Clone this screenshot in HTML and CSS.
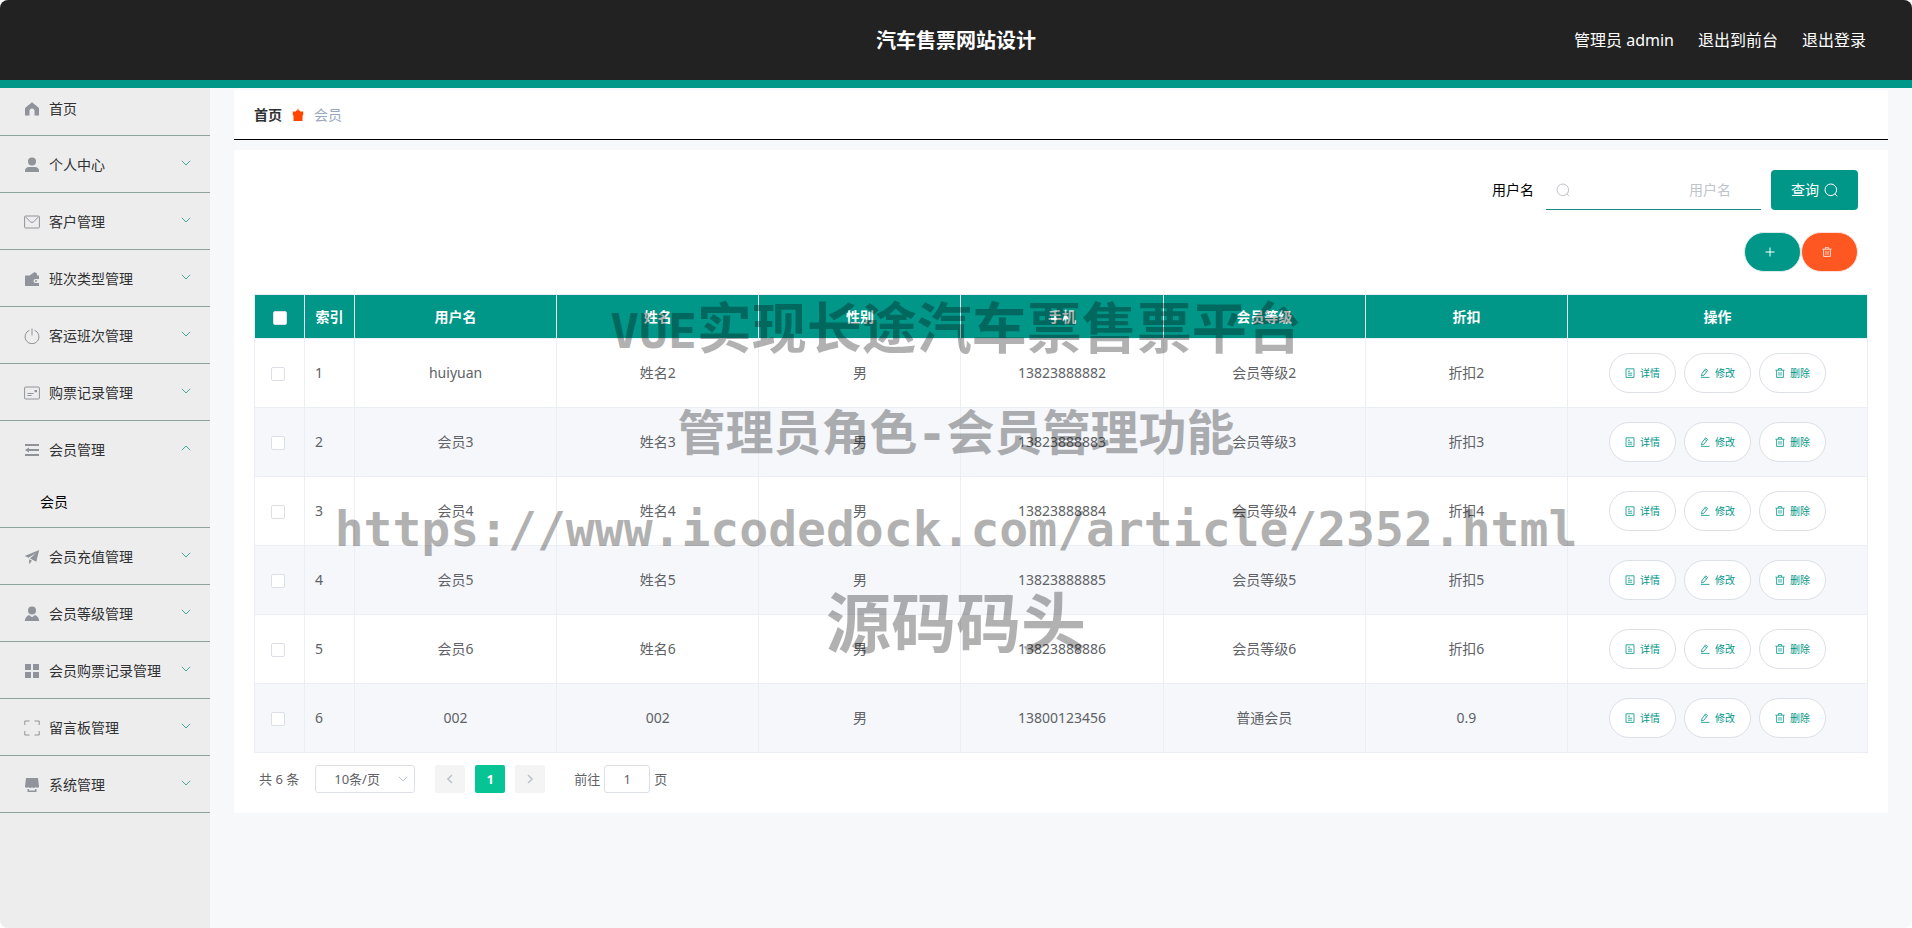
FILE: index.html
```html
<!DOCTYPE html>
<html lang="zh-CN">
<head>
<meta charset="utf-8">
<title>汽车售票网站设计</title>
<link rel="stylesheet" href="styles.css">
</head>
<body>
<svg class="sprite" aria-hidden="true">
  <symbol id="i-home" viewBox="0 0 16 16"><path fill="currentColor" d="M8 1.200 1 7v7.600h4.500V10a2.500 2.500 0 0 1 5 0v4.600H15V7z"/></symbol>
  <symbol id="i-user" viewBox="0 0 16 16"><circle fill="currentColor" cx="8" cy="4.500" r="4"/><path fill="currentColor" d="M1 15v-1.500a4 4 0 0 1 4-3.500h6a4 4 0 0 1 4 3.500V15z"/></symbol>
  <symbol id="i-mail" viewBox="0 0 16 16"><rect x=".6" y="2" width="14.800" height="12" rx="1" fill="none" stroke="currentColor"/><path fill="none" stroke="currentColor" d="m1.500 2.800 4.800 5a2.500 2.500 0 0 0 3.400 0l4.800-5"/></symbol>
  <symbol id="i-wallet" viewBox="0 0 16 16"><path fill="currentColor" d="M1 4.500h4.500L10.500 1l2.500 1.500v2h2V8h-3.500a2 2 0 0 0 0 4H15v3H1z"/><circle fill="currentColor" cx="12" cy="10" r="1"/></symbol>
  <symbol id="i-power" viewBox="0 0 16 16"><path fill="none" stroke="currentColor" d="M8 .5v7M5.500 2.200a7 7 0 1 0 5 0"/></symbol>
  <symbol id="i-card" viewBox="0 0 16 16"><rect x=".6" y="2" width="14.800" height="12" rx="1" fill="none" stroke="currentColor"/><path fill="none" stroke="currentColor" d="M3.500 8.500h6M3.500 10.500h4"/><path fill="currentColor" d="M10.500 5H13v2.200h-2.500z"/></symbol>
  <symbol id="i-fold" viewBox="0 0 16 16"><path fill="currentColor" d="M1 2h14v2H1zM5 7h10v2H5zM1 12h14v2H1zM1 8l4-2.500v5z"/></symbol>
  <symbol id="i-plane" viewBox="0 0 16 16"><path fill="currentColor" d="M15.200 1 .7 7l3.800 1.700L12 4 6 9.600l6.300 3.100zM5 10.200l.2 5L8 11.800z"/></symbol>
  <symbol id="i-member" viewBox="0 0 16 16"><circle fill="currentColor" cx="8" cy="4.500" r="4"/><path fill="currentColor" d="M.8 15c.2-3 1.700-5 4.200-6l3 2.300L11 9c2.500 1 4 3 4.200 6z"/></symbol>
  <symbol id="i-grid" viewBox="0 0 16 16"><path fill="currentColor" d="M1 1h6v6H1zM9 1h6v6H9zM1 9h6v6H1zM9 9h6v6H9z"/></symbol>
  <symbol id="i-full" viewBox="0 0 16 16"><path fill="none" stroke="currentColor" d="M.8 5V1h4.700M10.500 1h4.700v4M15.200 11v4h-4.700M5.500 15H.8v-4"/></symbol>
  <symbol id="i-shop" viewBox="0 0 16 16"><path fill="currentColor" d="M2 1h12l1 8.500a2 2 0 0 1-3.500.5 2 2 0 0 1-3.500 0 2 2 0 0 1-3.500 0A2 2 0 0 1 1 9.500zM3.500 12h1.500v1.500h6V12h1.500v3h-9z"/></symbol>
  <symbol id="i-down" viewBox="0 0 10 6"><path fill="none" stroke="currentColor" d="m.8.8 4.200 4.200L9.200.8"/></symbol>
  <symbol id="i-up" viewBox="0 0 10 6"><path fill="none" stroke="currentColor" d="M.8 5.200 5 1l4.200 4.200"/></symbol>
  <symbol id="i-left" viewBox="0 0 6 10"><path fill="none" stroke="currentColor" stroke-width="1.600" d="M5 1 1 5l4 4"/></symbol>
  <symbol id="i-right" viewBox="0 0 6 10"><path fill="none" stroke="currentColor" stroke-width="1.600" d="m1 1 4 4-4 4"/></symbol>
  <symbol id="i-bag" viewBox="0 0 12 14"><path fill="currentColor" d="M.8 3.500H4V2.600h1.500V.8h1v1.800H8v.9h3.200v3.700h-.7V13h-9V7.200H.8z"/></symbol>
  <symbol id="i-search" viewBox="0 0 14 14"><circle cx="6.800" cy="6.800" r="5.800" fill="none" stroke="currentColor"/><path stroke="currentColor" d="m10.800 10.800 2.500 2.500"/></symbol>
  <symbol id="i-plus" viewBox="0 0 10 10"><path stroke="currentColor" d="M5 .5v9M.5 5h9"/></symbol>
  <symbol id="i-trash" viewBox="0 0 10 10"><path fill="none" stroke="currentColor" stroke-width=".8" d="M.4 2.200h9.200M3.400 2V.6h3.200V2M1.600 2.400v7h6.800v-7M4 4v3.700M6 4v3.700"/></symbol>
  <symbol id="i-doc" viewBox="0 0 10 10"><path fill="none" stroke="currentColor" stroke-width=".8" d="M1 .8h8v8.600H1zM3 3.200h2M3 5.200h4M3 7.200h4"/></symbol>
  <symbol id="i-edit" viewBox="0 0 10 10"><path fill="none" stroke="currentColor" stroke-width=".8" d="M2 5.500 5.600.9l2 1.500L4 7.100l-2.500.9zM4.600 2.200l2 1.500M1 9.400h8.500"/></symbol>
</svg>
<div class="app">
  <header class="topbar">
    <h1 class="topbar-title">汽车售票网站设计</h1>
    <div class="topbar-links">
      <span>管理员 admin</span>
      <a href="#">退出到前台</a>
      <a href="#">退出登录</a>
    </div>
  </header>
  <div class="body">
    <nav class="sidebar">
      <a class="menu-item menu-home" href="#"><svg class="menu-icon"><use href="#i-home"/></svg>首页</a>
      <button class="menu-item"><svg class="menu-icon"><use href="#i-user"/></svg>个人中心<svg class="arrow"><use href="#i-down"/></svg></button>
      <button class="menu-item"><svg class="menu-icon"><use href="#i-mail"/></svg>客户管理<svg class="arrow"><use href="#i-down"/></svg></button>
      <button class="menu-item"><svg class="menu-icon"><use href="#i-wallet"/></svg>班次类型管理<svg class="arrow"><use href="#i-down"/></svg></button>
      <button class="menu-item"><svg class="menu-icon"><use href="#i-power"/></svg>客运班次管理<svg class="arrow"><use href="#i-down"/></svg></button>
      <button class="menu-item"><svg class="menu-icon"><use href="#i-card"/></svg>购票记录管理<svg class="arrow"><use href="#i-down"/></svg></button>
      <button class="menu-item menu-open"><svg class="menu-icon"><use href="#i-fold"/></svg>会员管理<svg class="arrow"><use href="#i-up"/></svg></button>
      <a class="submenu-item" href="#">会员</a>
      <button class="menu-item"><svg class="menu-icon"><use href="#i-plane"/></svg>会员充值管理<svg class="arrow"><use href="#i-down"/></svg></button>
      <button class="menu-item"><svg class="menu-icon"><use href="#i-member"/></svg>会员等级管理<svg class="arrow"><use href="#i-down"/></svg></button>
      <button class="menu-item"><svg class="menu-icon"><use href="#i-grid"/></svg>会员购票记录管理<svg class="arrow"><use href="#i-down"/></svg></button>
      <button class="menu-item"><svg class="menu-icon"><use href="#i-full"/></svg>留言板管理<svg class="arrow"><use href="#i-down"/></svg></button>
      <button class="menu-item"><svg class="menu-icon"><use href="#i-shop"/></svg>系统管理<svg class="arrow"><use href="#i-down"/></svg></button>
    </nav>
    <main class="main">
      <div class="breadcrumb">
        <a class="crumb-home" href="#">首页</a>
        <svg class="crumb-icon"><use href="#i-bag"/></svg>
        <span class="crumb-current">会员</span>
      </div>
      <section class="card">
        <form class="search">
          <label for="username">用户名</label>
          <span class="search-field">
            <svg class="search-icon"><use href="#i-search"/></svg>
            <input id="username" type="text" placeholder="用户名">
          </span>
          <button class="search-btn" type="button">查询<svg class="search-icon"><use href="#i-search"/></svg></button>
        </form>
        <div class="tools">
          <button class="tool tool-add" aria-label="新增"><svg class="small-icon"><use href="#i-plus"/></svg></button>
          <button class="tool tool-del" aria-label="删除"><svg class="small-icon"><use href="#i-trash"/></svg></button>
        </div>
        <table class="grid">
          <colgroup><col class="col-check"><col class="col-index"><col><col><col><col><col><col><col class="col-ops"></colgroup>
          <thead>
            <tr><th><input type="checkbox" aria-label="全选"></th><th>索引</th><th>用户名</th><th>姓名</th><th>性别</th><th>手机</th><th>会员等级</th><th>折扣</th><th>操作</th></tr>
          </thead>
          <tbody>
            <tr><td class="cell-check"><input type="checkbox" aria-label="选择 1"></td><td class="cell-index">1</td><td>huiyuan</td><td>姓名2</td><td>男</td><td>13823888882</td><td>会员等级2</td><td>折扣2</td><td><div class="ops"><button class="op"><svg class="small-icon"><use href="#i-doc"/></svg>详情</button><button class="op"><svg class="small-icon"><use href="#i-edit"/></svg>修改</button><button class="op"><svg class="small-icon"><use href="#i-trash"/></svg>删除</button></div></td></tr>
            <tr><td class="cell-check"><input type="checkbox" aria-label="选择 2"></td><td class="cell-index">2</td><td>会员3</td><td>姓名3</td><td>男</td><td>13823888883</td><td>会员等级3</td><td>折扣3</td><td><div class="ops"><button class="op"><svg class="small-icon"><use href="#i-doc"/></svg>详情</button><button class="op"><svg class="small-icon"><use href="#i-edit"/></svg>修改</button><button class="op"><svg class="small-icon"><use href="#i-trash"/></svg>删除</button></div></td></tr>
            <tr><td class="cell-check"><input type="checkbox" aria-label="选择 3"></td><td class="cell-index">3</td><td>会员4</td><td>姓名4</td><td>男</td><td>13823888884</td><td>会员等级4</td><td>折扣4</td><td><div class="ops"><button class="op"><svg class="small-icon"><use href="#i-doc"/></svg>详情</button><button class="op"><svg class="small-icon"><use href="#i-edit"/></svg>修改</button><button class="op"><svg class="small-icon"><use href="#i-trash"/></svg>删除</button></div></td></tr>
            <tr><td class="cell-check"><input type="checkbox" aria-label="选择 4"></td><td class="cell-index">4</td><td>会员5</td><td>姓名5</td><td>男</td><td>13823888885</td><td>会员等级5</td><td>折扣5</td><td><div class="ops"><button class="op"><svg class="small-icon"><use href="#i-doc"/></svg>详情</button><button class="op"><svg class="small-icon"><use href="#i-edit"/></svg>修改</button><button class="op"><svg class="small-icon"><use href="#i-trash"/></svg>删除</button></div></td></tr>
            <tr><td class="cell-check"><input type="checkbox" aria-label="选择 5"></td><td class="cell-index">5</td><td>会员6</td><td>姓名6</td><td>男</td><td>13823888886</td><td>会员等级6</td><td>折扣6</td><td><div class="ops"><button class="op"><svg class="small-icon"><use href="#i-doc"/></svg>详情</button><button class="op"><svg class="small-icon"><use href="#i-edit"/></svg>修改</button><button class="op"><svg class="small-icon"><use href="#i-trash"/></svg>删除</button></div></td></tr>
            <tr><td class="cell-check"><input type="checkbox" aria-label="选择 6"></td><td class="cell-index">6</td><td>002</td><td>002</td><td>男</td><td>13800123456</td><td>普通会员</td><td>0.9</td><td><div class="ops"><button class="op"><svg class="small-icon"><use href="#i-doc"/></svg>详情</button><button class="op"><svg class="small-icon"><use href="#i-edit"/></svg>修改</button><button class="op"><svg class="small-icon"><use href="#i-trash"/></svg>删除</button></div></td></tr>
          </tbody>
        </table>
        <div class="pager">
          <span class="pager-total">共 6 条</span>
          <span class="pager-size"><select aria-label="每页条数"><option>10条/页</option></select><svg class="size-arrow"><use href="#i-down"/></svg></span>
          <div class="pager-pages">
            <button class="page" aria-label="上一页" disabled><svg class="page-arrow"><use href="#i-left"/></svg></button>
            <button class="page page-active">1</button>
            <button class="page" aria-label="下一页" disabled><svg class="page-arrow"><use href="#i-right"/></svg></button>
          </div>
          <label class="pager-jump">前往<input type="text" value="1">页</label>
        </div>
      </section>
    </main>
  </div>
  <div class="watermark">
    <p class="wm-title"><span class="wm-latin">VUE</span>实现长途汽车票售票平台</p>
    <p class="wm-role">管理员角色<span class="wm-latin">-</span>会员管理功能</p>
    <p class="wm-url">https://www.icodedock.com/article/2352.html</p>
    <p class="wm-brand">源码码头</p>
  </div>
</div>
</body>
</html>
```
FILE: styles.css
```css
* { box-sizing: border-box; }

body {
  margin: 0;
  background: #fff;
  color: #606266;
  font-family: "Noto Sans", "Noto Sans CJK SC", sans-serif;
  font-size: 14px;
  line-height: 20px;
}

a { color: inherit; text-decoration: none; }
button, input, select { font: inherit; }
button { cursor: pointer; }

.sprite { position: absolute; width: 0; height: 0; }

.app {
  position: relative;
  display: flex;
  flex-direction: column;
  min-height: 100vh;
  overflow: hidden;
  border-radius: 8px;
  background: #f6f8fa;
}

/* top bar */
.topbar {
  display: grid;
  grid-template-columns: 1fr auto 1fr;
  align-items: center;
  height: 88px;
  padding: 0 46px;
  border-bottom: 8px solid #009688;
  background: #222;
  color: #fff;
  font-size: 16px;
}
.topbar-title { grid-column: 2; margin: 0; padding-top: 2px; font-size: 20px; line-height: 28px; }
.topbar-links { display: flex; justify-content: flex-end; gap: 24px; }

.body { display: flex; flex: 1; }

/* side menu */
.sidebar { flex: 0 0 210px; background: #ededed; }
.menu-item {
  display: flex;
  align-items: center;
  width: 100%;
  height: 57px;
  padding: 2px 19px 0 24px;
  border: 0;
  border-bottom: 1px solid #8fa39d;
  background: none;
  color: #303133;
  text-align: left;
}
.menu-home { height: 48px; padding: 0 19px 6px 24px; }
.menu-open { height: 56px; border-bottom: 0; }
.menu-icon { width: 16px; height: 16px; margin-right: 9px; color: #909399; }
.arrow { width: 10px; height: 6px; margin: 0 0 4px auto; color: #4aa79b; }
.submenu-item {
  display: block;
  height: 51px;
  padding-left: 40px;
  border-bottom: 1px solid #8fa39d;
  color: #000;
  line-height: 50px;
}

/* content */
.main { flex: 1; min-width: 0; padding: 2px 24px 24px; }
.breadcrumb {
  display: flex;
  align-items: center;
  height: 50px;
  margin-bottom: 10px;
  padding: 0 20px;
  border-bottom: 1px solid #000;
  background: #fff;
}
.crumb-home { color: #303133; font-weight: 700; }
.crumb-icon { width: 12px; height: 14px; margin: 0 10px; color: #ff4500; }
.crumb-current { color: #97a8be; }

.card { padding: 20px; background: #fff; }

.search { display: flex; align-items: center; justify-content: flex-end; margin-right: 10px; color: #000; }
.search-field {
  display: flex;
  align-items: center;
  width: 215px;
  height: 40px;
  margin: 0 10px 0 12px;
  padding: 0 30px 0 10px;
  border-bottom: 1px solid #1b8781;
  color: #c0c4cc;
}
.search-field input {
  flex: 1;
  min-width: 0;
  padding: 0;
  border: 0;
  outline: 0;
  background: none;
  text-align: right;
}
.search-field input::placeholder { color: #c0c4cc; }
.search-icon { flex: none; width: 14px; height: 14px; }
.search-btn {
  display: flex;
  align-items: center;
  gap: 5px;
  height: 40px;
  padding: 0 20px;
  border: 0;
  border-radius: 4px;
  background: #009688;
  color: #fff;
}

.tools { display: flex; justify-content: flex-end; margin: 22px 10px; }
.tool {
  display: flex;
  align-items: center;
  justify-content: center;
  width: 57px;
  height: 40px;
  padding: 0 5px 0 0;
  border: 1px solid #d9ece9;
  border-radius: 20px;
  color: #fff;
}
.tool-add { background: #009688; }
.tool-del { border-color: #fbe3da; background: #ff5722; }
.small-icon { width: 10px; height: 10px; }

/* table */
.grid {
  width: 100%;
  table-layout: fixed;
  border-collapse: separate;
  border-spacing: 0;
  border: 1px solid #ebeef5;
  border-width: 1px 0 0 1px;
  text-align: center;
}
.col-check, .col-index { width: 50px; }
.col-ops { width: 300px; }
.grid th, .grid td {
  padding: 0;
  border: 1px solid #ebeef5;
  border-width: 0 1px 1px 0;
}
.grid th { height: 44px; background: #009688; color: #fff; }
.grid td { height: 69px; }
.grid tbody tr:nth-child(even) { background: #f5f7fb; }
.grid .cell-check { padding-left: 16px; text-align: left; }
.grid .cell-index { padding-left: 10px; text-align: left; }
.grid input {
  display: inline-block;
  width: 14px;
  height: 14px;
  margin: 0;
  border: 1px solid #dcdfe6;
  border-radius: 2px;
  background: #fff;
  vertical-align: middle;
  appearance: none;
}
.ops { display: flex; justify-content: center; gap: 8px; }
.op {
  display: flex;
  align-items: center;
  gap: 5px;
  height: 40px;
  padding: 0 15px;
  border: 1px solid #dcdfe6;
  border-radius: 20px;
  background: #fff;
  color: #009688;
  font-size: 10px;
}

/* pagination */
.pager { display: flex; align-items: center; margin-top: 12px; padding-left: 5px; font-size: 13px; }
.pager-size { position: relative; margin: 0 20px 0 16px; }
.pager-size select, .pager-jump input {
  height: 28px;
  border: 1px solid #dcdfe6;
  border-radius: 3px;
  background: #fff;
  color: #606266;
}
.pager-size select { display: block; width: 100px; padding: 0 0 0 18px; appearance: none; }
.size-arrow { position: absolute; top: 11px; right: 7px; width: 10px; height: 6px; color: #c0c4cc; }
.pager-pages { display: flex; gap: 10px; }
.page {
  display: flex;
  align-items: center;
  justify-content: center;
  width: 30px;
  height: 28px;
  padding: 0;
  border: 0;
  border-radius: 2px;
  background: #f4f4f5;
  color: #c0c4cc;
}
.page-active { background: #07c495; color: #fff; font-weight: 700; }
.page-arrow { width: 6px; height: 10px; }
.pager-jump { display: flex; align-items: center; margin-left: 29px; }
.pager-jump input { width: 46px; margin: 0 4px; text-align: center; }

/* watermark laid over the page */
.watermark {
  position: absolute;
  inset: 284px 0 auto;
  color: #000;
  font-family: "Noto Sans CJK SC", sans-serif;
  font-weight: 700;
  opacity: 0.3;
  pointer-events: none;
  text-align: center;
  white-space: nowrap;
}
.watermark p { margin: 0; }
.wm-title { font-size: 55px; line-height: 80px; }
.wm-latin, .wm-url { font-family: "DejaVu Sans Mono", monospace; font-size: 48px; }
.wm-role { padding-top: 18px; font-size: 48px; line-height: 80px; }
.wm-url { padding-top: 16px; line-height: 80px; }
.wm-brand { padding-top: 10px; font-size: 65px; line-height: 80px; }
```
